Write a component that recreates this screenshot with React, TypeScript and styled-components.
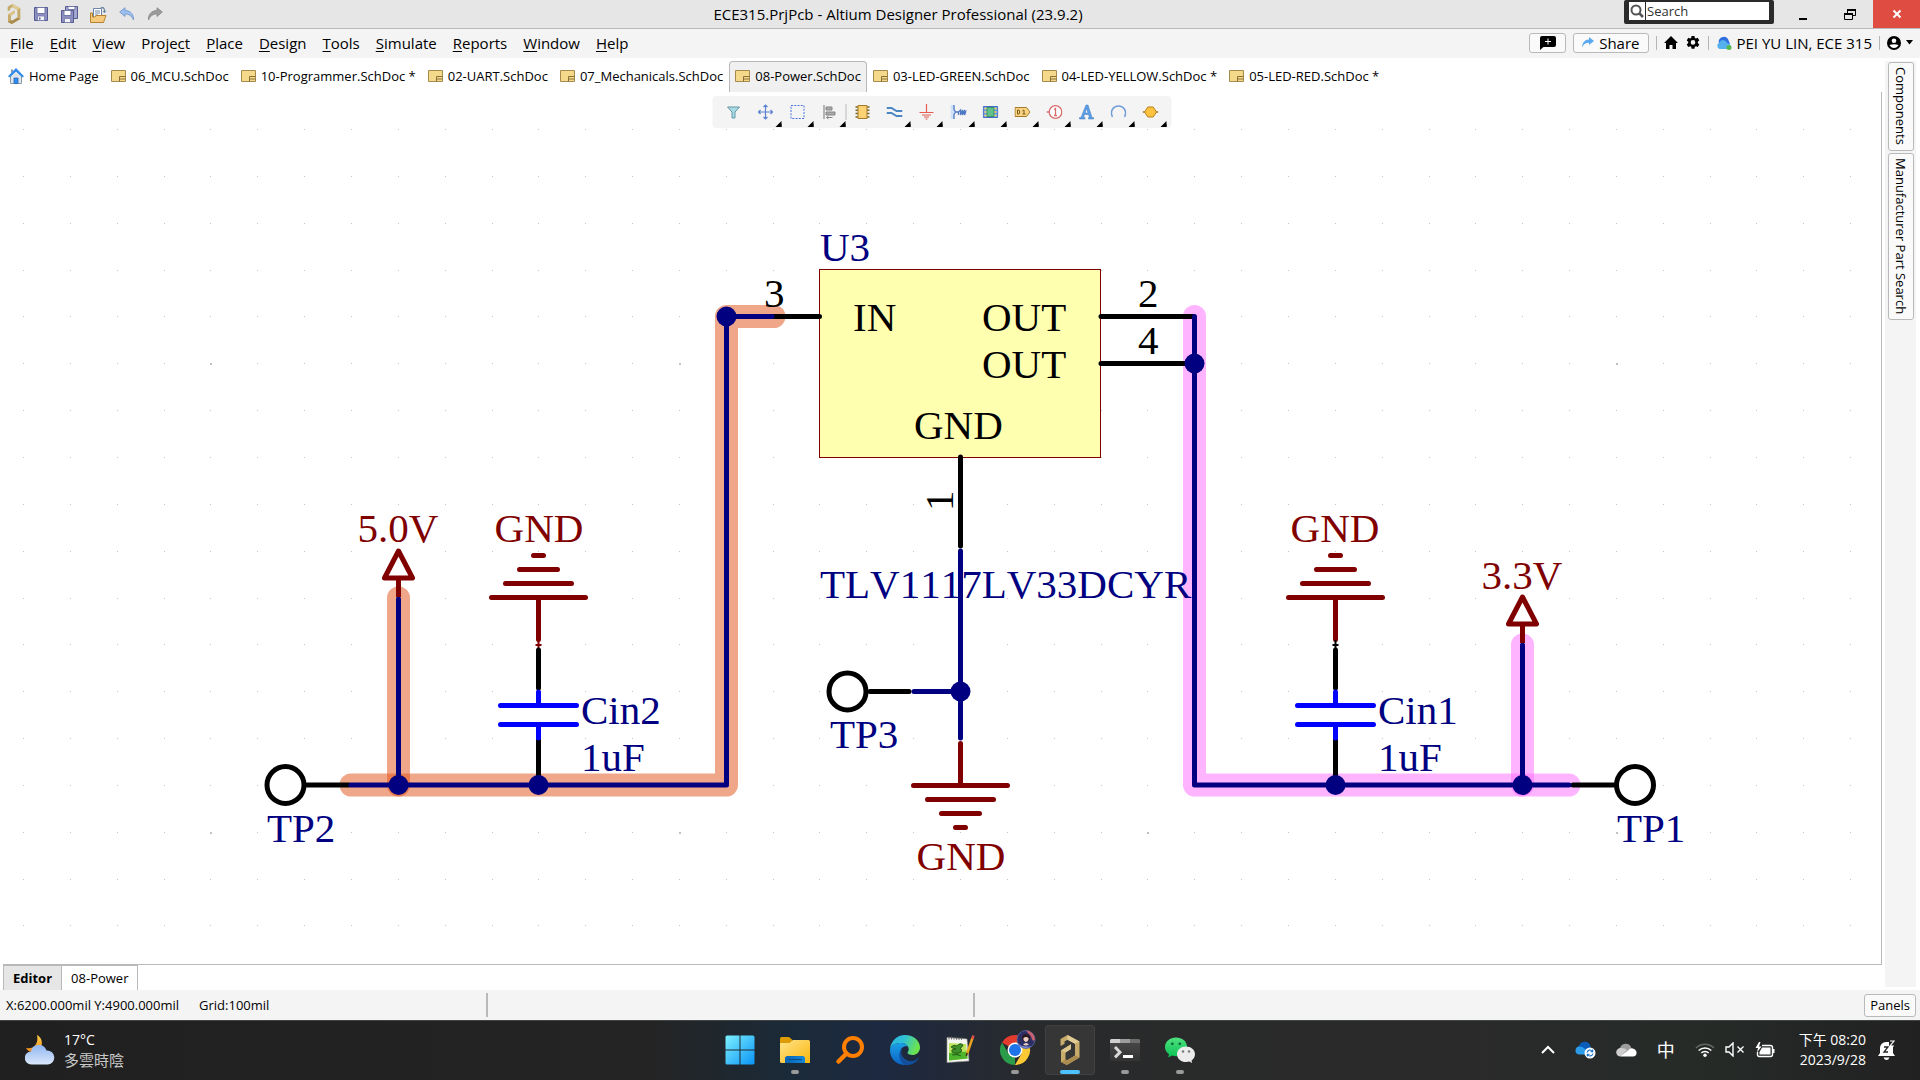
import React from "react";
import styled, { createGlobalStyle, css } from "styled-components";

const UI = `"Open Sans", "Noto Sans", "Noto Sans CJK TC", sans-serif`;

const Global = createGlobalStyle`
  *, *::before, *::after { box-sizing: border-box; }
  html, body, #root { height: 100%; }
  body { margin: 0; font-family: ${UI}; font-size: 13px; color: #000; background: #fff; overflow: hidden; }
  button, input { font: inherit; color: inherit; }
  svg { display: block; flex: none; }
`;

const bare = css`
  border: 0;
  padding: 0;
  margin: 0;
  background: none;
  display: flex;
  align-items: center;
  white-space: nowrap;
`;

const Shell = styled.div`
  height: 100%;
  display: flex;
  flex-direction: column;
`;

/* ---------- title bar ---------- */
const TitleBar = styled.header`
  display: grid;
  grid-template-columns: 1fr auto 1fr;
  height: 29px;
  background: #e6e6e6;
  border-bottom: 1px solid #b9b9b9;
`;
const QuickAccess = styled.div`
  display: flex;
  align-items: center;
  gap: 12px;
  padding-left: 7px;
`;
const IconButton = styled.button`
  ${bare}
  justify-content: center;
`;
const Title = styled.h1`
  margin: 0;
  font-size: 15px;
  font-weight: 400;
  line-height: 28px;
  padding-right: 124px;
`;
const WindowTools = styled.div`
  display: flex;
  justify-content: flex-end;
  align-items: flex-start;
`;
const SearchBox = styled.label`
  display: flex;
  height: 24px;
  width: 150px;
  padding: 2px 5px 4px;
  gap: 1px;
  background: #2b2b2b;
  border-radius: 2px;
  margin-right: 5px;
`;
const SearchIcon = styled.span`
  width: 16px;
  background: #fff;
  display: grid;
  place-items: center;
`;
const SearchInput = styled.input`
  flex: 1;
  min-width: 0;
  border: 0;
  padding: 0 1px;
  background: #fff;
  font-size: 13px;
  outline: 0;
  &::placeholder { color: #333; opacity: 1; }
`;
const WinButton = styled(IconButton)<{ $close?: boolean }>`
  width: 47px;
  height: 28px;
  background: ${(p) => (p.$close ? "#df4d42" : "none")};
`;

/* ---------- menu bar ---------- */
const MenuBar = styled.div`
  display: flex;
  align-items: center;
  justify-content: space-between;
  height: 29px;
  background: #f4f4f4;
  padding: 0 7px 2px 10px;
`;
const Menus = styled.nav`
  display: flex;
  gap: 16px;
`;
const MenuButton = styled.button`
  ${bare}
  display: block;
  font-size: 15px;
  line-height: 26px;
  u { text-underline-offset: 2px; text-decoration-thickness: 1px; }
`;
const Account = styled.div`
  display: flex;
  align-items: center;
  gap: 7px;
  font-size: 15px;
`;
const BoxButton = styled.button`
  ${bare}
  justify-content: center;
  gap: 5px;
  height: 20px;
  padding: 0 8px;
  border: 1px solid #b9b9b9;
  border-radius: 3px;
  background: #fafafa;
`;
const CommentButton = styled(BoxButton)`
  width: 37px;
`;
const BarSep = styled.span`
  width: 1px;
  height: 14px;
  background: #b5b5b5;
`;
const UserButton = styled.button`
  ${bare}
  gap: 5px;
`;

/* ---------- work area ---------- */
const Work = styled.div`
  flex: 1;
  min-height: 0;
  display: grid;
  grid-template-columns: 1fr 35px;
`;
const Main = styled.div`
  min-width: 0;
  display: flex;
  flex-direction: column;
  padding-right: 3px;
`;
const DocTabs = styled.div`
  display: flex;
  align-items: flex-end;
  height: 34px;
  padding-left: 2px;
`;
const DocTab = styled.button<{ $active?: boolean }>`
  ${bare}
  gap: 5px;
  height: 31px;
  padding: 0 5px 2px;
  font-size: 13px;
  border: 1px solid ${(p) => (p.$active ? "#b9b9b9" : "transparent")};
  border-bottom: 0;
  border-radius: 4px 4px 0 0;
  background: ${(p) => (p.$active ? "#f0f0f0" : "none")};
`;
const Canvas = styled.main`
  position: relative;
  flex: 1;
  min-height: 0;
  border-right: 1px solid #b9b9b9;
  border-bottom: 1px solid #b9b9b9;
  margin-left: 3px;
`;
const Sheet = styled.svg`
  width: 100%;
  height: 100%;
`;
const ActiveBar = styled.div`
  position: absolute;
  top: 4px;
  left: 50%;
  transform: translateX(-50%);
  display: flex;
  align-items: center;
  height: 32px;
  padding: 0 5px;
  background: #f4f4f4;
  border-radius: 4px;
`;
const Tool = styled.button<{ $more?: boolean }>`
  ${bare}
  position: relative;
  justify-content: center;
  width: 32px;
  height: 32px;
  ${(p) =>
    p.$more &&
    css`
      &::after {
        content: "";
        position: absolute;
        right: 0;
        bottom: 1px;
        border: 3px solid transparent;
        border-right-color: #000;
        border-bottom-color: #000;
      }
    `}
`;
const ToolSep = styled.span`
  width: 1px;
  height: 16px;
  background: #b9b9b9;
`;
const SideTabs = styled.aside`
  display: flex;
  flex-direction: column;
  gap: 2px;
  margin: 3px 4px 3px 0;
  padding: 1px 2px 0 3px;
  background: #f4f4f4;
`;
const SideTab = styled.button`
  ${bare}
  writing-mode: vertical-rl;
  justify-content: center;
  padding: 4px 0 5px;
  font-size: 13px;
  line-height: 24px;
  border: 1px solid #b9b9b9;
  border-radius: 3px;
  background: #fafafa;
`;
const SheetTabs = styled.div`
  display: flex;
  height: 25px;
  padding-left: 3px;
`;
const SheetTab = styled.button<{ $active?: boolean }>`
  ${bare}
  padding: 0 9px;
  font-size: 13px;
  border: solid #b9b9b9;
  border-width: 1px 1px 0 ${(p) => (p.$active ? "1px" : "0")};
  background: ${(p) => (p.$active ? "#e6e6e6" : "#fff")};
  font-weight: ${(p) => (p.$active ? 700 : 400)};
`;

/* ---------- status bar ---------- */
const StatusBar = styled.footer`
  display: flex;
  align-items: center;
  height: 30px;
  padding: 0 4px 0 6px;
  background: #f4f4f4;
`;
const StatusCell = styled.div<{ $width: string }>`
  display: flex;
  align-items: center;
  gap: 20px;
  width: ${(p) => p.$width};
  height: 24px;
  border-right: 2px solid #b9b9b9;
`;
const PanelsButton = styled(BoxButton)`
  height: 23px;
  padding: 0 5px;
  margin-left: auto;
  font-size: 13px;
`;

/* ---------- taskbar ---------- */
const Taskbar = styled.div`
  display: grid;
  grid-template-columns: 1fr auto 1fr;
  align-items: center;
  height: 60px;
  padding-bottom: 2px;
  border-top: 1px solid #404645;
  color: #fff;
  background: linear-gradient(90deg, #202020 0%, #242424 34%, #1b2a38 41%, #1d2941 46%, #292a2b 54%, #2a2a2a 75%, #262b28 88%, #212121 100%);
`;
const Weather = styled.button`
  ${bare}
  gap: 9px;
  padding-left: 25px;
  text-align: left;
  font-size: 14px;
  line-height: 20px;
`;
const Dim = styled.span`
  display: block;
  font-size: 15px;
  color: #c8c8c8;
`;
const Apps = styled.div`
  display: flex;
  gap: 5px;
`;
const AppButton = styled.button<{ $state?: "open" | "active" }>`
  ${bare}
  position: relative;
  justify-content: center;
  width: 50px;
  height: 50px;
  border-radius: 4px;
  ${(p) => p.$state === "active" && "background: #363636; box-shadow: inset 0 0 0 1px #414141;"}
  &::after {
    content: "";
    display: ${(p) => (p.$state ? "block" : "none")};
    position: absolute;
    bottom: 1px;
    left: 50%;
    transform: translateX(-50%);
    width: ${(p) => (p.$state === "active" ? "20px" : "8px")};
    height: 4px;
    border-radius: 2px;
    background: ${(p) => (p.$state === "active" ? "#4cc2ff" : "#9a9a9a")};
  }
`;
const Tray = styled.div`
  display: flex;
  align-items: center;
  justify-content: flex-end;
  gap: 20px;
  padding-right: 25px;
`;
const TrayGroup = styled.button`
  ${bare}
  gap: 10px;
`;
const ClockGroup = styled.div`
  display: flex;
  align-items: center;
  gap: 12px;
  padding-left: 4px;
`;
const Ime = styled.button`
  ${bare}
  font-size: 18px;
  line-height: 20px;
`;
const Clock = styled.button`
  ${bare}
  display: block;
  text-align: right;
  font-size: 14px;
  line-height: 20px;
`;

/* ---------- icons ---------- */
const Altium = ({ w, h }: { w: number; h: number }) => (
  <svg width={w} height={h} viewBox="0 0 20 30">
    <path d="M.5 4L7.500 0 19.500 6.500V22.500L6.800 30 1 27V15.500L11 9.300V14L5.500 17.500V24.500L7 25.300 15 20.500V8.800L7.500 4.700 4.500 6.500V9L.5 11Z" fill="#c6ab6b" />
    <path d="M7.500 0L19.500 6.500 15 8.800 7.500 4.700Z" fill="#e0cb93" />
    <path d="M1 27L5.500 24.500 7 25.300 15 20.500 19.500 22.500 6.800 30Z" fill="#a98c4e" />
    <path d="M11 9.300V14L5.500 17.500 1 15.500Z" fill="#dcc68c" />
  </svg>
);

const Floppy = () => (
  <svg width="16" height="16" viewBox="0 0 16 16">
    <path d="M1.500 1.500h13v13h-13z" fill="#8d8fc0" stroke="#54598f" />
    <path d="M4 1.500h8v6H4z" fill="#fff" stroke="#7377a8" />
    <path d="M4.500 10h7v4.500h-7z" fill="#f3f3f8" stroke="#7377a8" strokeWidth=".8" />
    <path d="M6 11.500h1.500v2H6z" fill="#54598f" />
  </svg>
);
const FloppyAll = () => (
  <svg width="17" height="17" viewBox="0 0 17 17">
    <path d="M4.500.5h12v12h-12z" fill="#a3a5cf" stroke="#54598f" />
    <path d="M7 .5h7v3H7z" fill="#fff" stroke="#7377a8" />
    <path d="M.5 4.500h12v12H.5z" fill="#8d8fc0" stroke="#54598f" />
    <path d="M3 4.500h7v5H3z" fill="#fff" stroke="#7377a8" />
    <path d="M3.500 12.500h6v4h-6z" fill="#f3f3f8" stroke="#7377a8" strokeWidth=".8" />
  </svg>
);
const OpenDoc = () => (
  <svg width="17" height="17" viewBox="0 0 17 17">
    <path d="M3.500 2.500h8v9h-8z" fill="#fff" stroke="#6c87a8" />
    <path d="M5 5h5M5 7h5M5 9h3" stroke="#6c87a8" />
    <path d="M10 2c3-2 5-1 5 3l1.500-.5L14.500 7 12.500 5 14 5c0-3-1.500-3-4-3z" fill="#5a7c9c" />
    <path d="M.5 7h2v4h2.500l1-1.500h10l-2.500 7H.5z" fill="#f5ca7c" stroke="#b5822f" />
  </svg>
);
const Undo = () => (
  <svg width="16" height="14" viewBox="0 0 16 14">
    <path d="M6 .7L.7 5 6 9.500V7c4 0 6.500 1.500 8.500 6C15 8 12 3.500 6 3.500z" fill="#9cc0ee" stroke="#6b91c9" strokeWidth=".8" />
  </svg>
);
const Redo = () => (
  <svg width="16" height="14" viewBox="0 0 16 14">
    <path d="M10 .7L15.300 5 10 9.500V7c-4 0-6.500 1.500-8.500 6C1 8 4 3.500 10 3.500z" fill="#9b9b9b" stroke="#858585" strokeWidth=".8" />
  </svg>
);
const Doc = () => (
  <svg width="15" height="12" viewBox="0 0 15 12">
    <path d="M.5.500h14v11H.5z" fill="#f5d98b" stroke="#a48a4c" />
    <path d="M8.500 11.500v-5h6M8.500 9h6" fill="none" stroke="#8a713a" />
  </svg>
);
const HomeBlue = () => (
  <svg width="16" height="16" viewBox="0 0 16 16">
    <path d="M2.500 8v7.500h11V8L8 3z" fill="#dfe4ea" stroke="#8e9aa8" />
    <path d="M3 5V1.500h2V4z" fill="#8e9aa8" />
    <path d="M8 0l8 8.200-1.500 1.300L8 3.200 1.500 9.500 0 8.200z" fill="#2f8cf0" />
    <path d="M6 10h4v5.500H6z" fill="#2f8cf0" stroke="#1c62b5" strokeWidth=".7" />
  </svg>
);

const toolIcons: { name: string; more?: boolean; art: React.ReactNode }[] = [
  { name: "Filter", art: <path d="M2 3h12l-4.500 5v6h-3V8z" fill="#a8dbe2" stroke="#6497a8" /> },
  { name: "Move", more: true, art: <path d="M8 1v14M1 8h14M6 3l2-2 2 2M6 13l2 2 2-2M3 6L1 8l2 2M13 6l2 2-2 2" fill="none" stroke="#5b82d0" strokeWidth="1.200" /> },
  { name: "Select area", more: true, art: <path d="M1.500 1.500h13v13h-13z" fill="none" stroke="#4b74e0" strokeDasharray="2 1.250" /> },
  {
    name: "Align", more: true,
    art: <><path d="M2.500 1v14" stroke="#777" /><path d="M4.500 3h6v3h-6zM4.500 8h9v3h-9z" fill="#aaa" stroke="#858585" /><path d="M11 13.500H5M7 12l-2 1.500L7 15" fill="none" stroke="#888" /></>,
  },
  {
    name: "Place part",
    art: <><path d="M1 3h14M1 6.300h14M1 9.600h14M1 13h14" stroke="#7b6630" strokeWidth="1.500" /><path d="M3.500 1.500h9v13h-9z" fill="#fcd272" stroke="#a37a2a" /></>,
  },
  { name: "Place wire", more: true, art: <path d="M0 4h5l5 3h6M0 9h5l5 3h6" fill="none" stroke="#4a86c4" strokeWidth="2" /> },
  { name: "Place ground", more: true, art: <path d="M8 0v8.500M1 8.500h14M3.500 11h9M5.500 13h5M7 15h2" stroke="#e25c50" strokeWidth="1.200" /> },
  {
    name: "Place harness", more: true,
    art: <><path d="M0 1h3.500v14H0z" fill="#cfe2fa" /><path d="M3.500 1v4.500L5 8l-1.500 2.500V15M5 8h2.500M8 11V8l2-2v5l2-5v5l2-5v5l2-5" fill="none" stroke="#4f78c4" strokeWidth="1.300" /></>,
  },
  {
    name: "Place sheet symbol", more: true,
    art: <><path d="M.8 2.500h14.400v11H.8z" fill="#6f9be8" stroke="#4371c9" /><path d="M4.500 3.500h7v9h-7z" fill="#62c08a" stroke="#3b8f64" /><path d="M2 4.500H4M2 8H4M2 11.500H4M12 4.500h2M12 8h2M12 11.500h2" stroke="#ffe14a" strokeWidth="1.500" /></>,
  },
  {
    name: "Place port", more: true,
    art: <><path d="M.5 3.500h11.500L15.500 8 12 12.500H.5z" fill="#fad480" stroke="#a37a2a" /><path d="M3 6v4h1.500q1.500-2 0-4zM8 6.800L9.500 6v4M8 10h3" fill="none" stroke="#7b5a20" /></>,
  },
  {
    name: "Place directive", more: true,
    art: <><circle cx="9" cy="8" r="6.300" fill="#fff" stroke="#d86d6d" strokeWidth="1.300" /><path d="M0 8h3M7.500 5.500L9 4.500v7M7.500 11.500h3" fill="none" stroke="#d86d6d" strokeWidth="1.300" /></>,
  },
  {
    name: "Place text", more: true,
    art: <path d="M7.500 1h2l4 12.500H15V15h-5v-1.500h1L10 10.500H6L5 13.500h1.500V15H1v-1.500h1.500zM8 4.500L6.500 9h3z" fill="#5c9ee6" stroke="#3d7cc4" strokeWidth=".5" />,
  },
  { name: "Place arc", more: true, art: <path d="M2 13C-1 7 3 2 8 2s9 5 6 11" fill="none" stroke="#6f9cd6" strokeWidth="1.500" /> },
  {
    name: "Place junction", more: true,
    art: <><path d="M0 8h16" stroke="#a37a2a" strokeWidth="1.500" /><path d="M5.300 3h5.400L14 8l-3.300 5H5.300L2 8z" fill="#fdc23e" stroke="#b9821e" /></>,
  },
];

/* ---------- schematic ---------- */
const P = 46.85;
const NAVY = "#000080";
const MAROON = "#800000";

const Label = styled.text`
  font-family: "Liberation Serif", "Times New Roman", serif;
  font-size: 41px;
  font-kerning: none;
`;

const Line = ({ d, c }: { d: string; c: string }) => (
  <path d={d} stroke={c} strokeWidth="5" strokeLinecap="round" strokeLinejoin="round" fill="none" />
);
const Highlight = ({ d, c }: { d: string; c: string }) => (
  <path d={d} stroke={c} strokeOpacity=".5" strokeWidth="23" strokeLinecap="round" strokeLinejoin="round" fill="none" />
);
const Junction = ({ x, y }: { x: number; y: number }) => <circle cx={x} cy={y} r="10" fill={NAVY} />;
const TestPoint = ({ x, y }: { x: number; y: number }) => (
  <circle cx={x} cy={y} r="18.500" fill="#fff" stroke="#000" strokeWidth="5" />
);
const Ground = ({ x, y, up }: { x: number; y: number; up?: boolean }) => {
  const s = up ? -1 : 1;
  return (
    <Line
      c={MAROON}
      d={[47, 33, 19, 5].map((w, i) => `M${x - w} ${y + s * i * 14}H${x + w}`).join("") + `M${x} ${y}V${y - s * 42}`}
    />
  );
};
const Supply = ({ x, y }: { x: number; y: number }) => (
  <path d={`M${x} ${y}V${y - 19}M${x - 14} ${y - 19}L${x} ${y - 46}L${x + 14} ${y - 19}Z`} fill="none" stroke={MAROON} strokeWidth="5" strokeLinejoin="round" />
);
const Capacitor = ({ x, joint }: { x: number; joint: string }) => (
  <>
    <path d={`M${x} 640V650M${x - 3} 645H${x + 3}`} stroke={joint} strokeWidth="2" />
    <Line c="#000" d={`M${x} 650V688M${x} 740V785`} />
    <Line c="#0000ff" d={`M${x} 692V705M${x - 38} 705.500H${x + 38}M${x - 38} 724.500H${x + 38}M${x} 725V738`} />
  </>
);

const Grid = () => {
  const dots: React.ReactNode[] = [];
  for (let r = 0; r < 18; r++)
    for (let c = 0; c < 40; c++) {
      const major = c % 10 === 4 && r % 10 === 5;
      dots.push(
        <rect key={`${r}-${c}`} x={Math.round(23 + c * P)} y={Math.round(129 + r * P)} width={major ? 2 : 1} height={major ? 2 : 1} fill={major ? "#c0c0c0" : "#c4c4c4"} />
      );
    }
  return <g shapeRendering="crispEdges">{dots}</g>;
};

const ORANGE = "#e15014";
const PINK = "#ff69ff";

const Schematic = () => (
  <Sheet viewBox="3 92 1878 872" role="img" aria-label="Power supply schematic">
    <Grid />
    <Highlight c={ORANGE} d="M351 785H726.500V316.500H774" />
    <Highlight c={ORANGE} d="M398.500 598V785" />
    <Highlight c={PINK} d="M1194.500 316.500V785H1569" />
    <Highlight c={PINK} d="M1522.500 645V785" />

    <rect x="819.500" y="269.500" width="281" height="188" fill="#ffffb0" stroke={MAROON} />
    <Line c="#000" d="M774 316.500H819.500M1101 316.500H1193M1101 363.500H1193M960.500 457V546M307 785H349M870 691.500H909M1573 785H1614" />
    <Line c={NAVY} d="M351 785H726.500V316.500H772M398.500 599V785M1194.500 316.500V785H1569M1522.500 645V785M960.500 551V738M914 691.500H960" />

    <Supply x={398.5} y={597} />
    <Supply x={1522.5} y={643} />
    <Ground x={538.5} y={597.5} up />
    <Ground x={1335.5} y={597.5} up />
    <Ground x={960.5} y={785.5} />
    <Capacitor x={538.5} joint={MAROON} />
    <Capacitor x={1335.5} joint="#000" />

    <Junction x={398.5} y={785} />
    <Junction x={538.5} y={785} />
    <Junction x={726.5} y={316.5} />
    <Junction x={1194.5} y={363.5} />
    <Junction x={1335.5} y={785} />
    <Junction x={1522.5} y={785} />
    <Junction x={960.5} y={691.5} />
    <TestPoint x={285.5} y={785} />
    <TestPoint x={847.5} y={691.5} />
    <TestPoint x={1635} y={785} />

    <g fill="#000">
      <Label x="764" y="307">3</Label>
      <Label x="853" y="331">IN</Label>
      <Label x="982" y="331">OUT</Label>
      <Label x="982" y="378">OUT</Label>
      <Label x="914" y="439">GND</Label>
      <Label x="1138" y="307">2</Label>
      <Label x="1138" y="354">4</Label>
      <Label transform="translate(953 511) rotate(-90)">1</Label>
    </g>
    <g fill={NAVY}>
      <Label x="820" y="261">U3</Label>
      <Label x="820" y="598">TLV1117LV33DCYR</Label>
      <Label x="267" y="842">TP2</Label>
      <Label x="830" y="748">TP3</Label>
      <Label x="1617" y="842">TP1</Label>
      <Label x="581" y="724">Cin2</Label>
      <Label x="581" y="771">1uF</Label>
      <Label x="1378" y="724">Cin1</Label>
      <Label x="1378" y="771">1uF</Label>
    </g>
    <g fill={MAROON} textAnchor="middle">
      <Label x="398" y="542">5.0V</Label>
      <Label x="539" y="542">GND</Label>
      <Label x="1335" y="542">GND</Label>
      <Label x="1522" y="589">3.3V</Label>
      <Label x="961" y="870">GND</Label>
    </g>
  </Sheet>
);

/* ---------- data ---------- */
const menus: [string, string, string][] = [
  ["", "F", "ile"], ["", "E", "dit"], ["", "V", "iew"], ["Proje", "c", "t"], ["", "P", "lace"], ["", "D", "esign"],
  ["", "T", "ools"], ["", "S", "imulate"], ["", "R", "eports"], ["", "W", "indow"], ["", "H", "elp"],
];
const docs = [
  "06_MCU.SchDoc", "10-Programmer.SchDoc *", "02-UART.SchDoc", "07_Mechanicals.SchDoc", "08-Power.SchDoc",
  "03-LED-GREEN.SchDoc", "04-LED-YELLOW.SchDoc *", "05-LED-RED.SchDoc *",
];

const apps: { name: string; state?: "open" | "active"; art: React.ReactNode }[] = [
  {
    name: "Start",
    art: (
      <svg width="30" height="30" viewBox="0 0 30 30">
        <defs><linearGradient id="win" x1="0" y1="0" x2="1" y2="1"><stop offset="0" stopColor="#7df0ff" /><stop offset="1" stopColor="#0a94f5" /></linearGradient></defs>
        <path d="M2 .500H14.500V14.500H.5V2Q.5.500 2 .500ZM15.500.500H28Q29.500.500 29.500 2V14.500H15.500ZM.5 15.500H14.500V29.500H2Q.5 29.500.5 28ZM15.500 15.500H29.500V28Q29.500 29.500 28 29.500H15.500Z" fill="url(#win)" />
      </svg>
    ),
  },
  {
    name: "File Explorer", state: "open",
    art: (
      <svg width="30" height="28" viewBox="0 0 30 28">
        <defs>
          <linearGradient id="fold" x1="0" y1="0" x2="1" y2="1"><stop offset="0" stopColor="#ffe48a" /><stop offset="1" stopColor="#fbb60d" /></linearGradient>
          <linearGradient id="tray" x1="0" y1="0" x2="1" y2="0"><stop offset="0" stopColor="#0a64b4" /><stop offset="1" stopColor="#1387d8" /></linearGradient>
        </defs>
        <path d="M0 2.500Q0 1 1.500 1H9L12.500 4V8H0Z" fill="#dd9c06" />
        <path d="M0 7H9.500L13 4H28.500Q30 4 30 5.500V27H1.500Q0 27 0 25.500Z" fill="url(#fold)" />
        <path d="M5 27V22.500Q5 20 7.500 20H22.500Q25 20 25 22.500V27Z" fill="url(#tray)" />
        <path d="M8.500 23.500H21.500" stroke="#074a86" />
      </svg>
    ),
  },
  {
    name: "Search Everything",
    art: (
      <svg width="30" height="30" viewBox="0 0 30 30">
        <circle cx="18" cy="12" r="9" fill="none" stroke="#ff7f00" strokeWidth="4" />
        <path d="M11.500 18.500L3.500 26.500" stroke="#ff7f00" strokeWidth="4.500" strokeLinecap="round" />
      </svg>
    ),
  },
  {
    name: "Edge",
    art: (
      <svg width="30" height="30" viewBox="0 0 30 30">
        <defs>
          <linearGradient id="e1" x1="0" y1="0" x2="1" y2=".3"><stop offset="0" stopColor="#2bb4e8" /><stop offset=".5" stopColor="#30c2d4" /><stop offset="1" stopColor="#6be34f" /></linearGradient>
          <linearGradient id="e2" x1="0" y1="0" x2="0" y2="1"><stop offset="0" stopColor="#1ba0e6" /><stop offset="1" stopColor="#0b62c4" /></linearGradient>
        </defs>
        <path d="M0 14C1 6 7 0 15 0c9 0 15 6 15 12.500 0 5-4 7.500-7.500 7.500-3 0-5-1-5-2.200 0-.8 1.200-1.500 1.200-3.800 0-3-3-6-7.500-6C6 8 1.500 10 0 14z" fill="url(#e1)" />
        <path d="M0 14C1.500 10 6 8 11 8c3.500 0 6 1.700 7 3.500-5-1.500-9.500 3-6.500 9C14 25 20 28 25 26.500 23 28.500 19 30 15 30 6 30-.5 23 0 14z" fill="url(#e2)" />
        <path d="M12.300 13.500C10 17 11 23 17 25.500c4 1.600 8.500.500 11-2.500.6-.6 1 0 .7.500C26 28 21 30 16 30c-6-1-9.500-12-3.700-16.500z" fill="#124f9c" />
      </svg>
    ),
  },
  {
    name: "Notepad++",
    art: (
      <svg width="30" height="30" viewBox="0 0 30 30">
        <path d="M2 2.500L22 4 24 26 2 27.500Z" fill="#f4f4f0" stroke="#9a9a96" strokeWidth=".6" />
        <path d="M4 8L21 9 22.500 23.500 4 25.500Z" fill="#b9e65c" />
        <path d="M4 18L22 16.500 22.500 23.500 4 25.500Z" fill="#4fb52c" />
        <path d="M6 12q3-3 6-1 3-4 6-1-1 3-3 3 3 2 1 4-3 2-6 1-4 0-3-3 2-1 4-1-3 0-5-2zM7 20q5-2 9 1" fill="#3f8f2a" stroke="#1d4c14" strokeWidth=".8" />
        <path d="M4 1.500v3M6.500 1.500v3M9 1.700v3M11.500 1.800v3M14 2v3M16.500 2v3" stroke="#555" strokeWidth=".8" />
        <path d="M27.500 3L22 19" stroke="#e8a11c" strokeWidth="2.500" />
        <path d="M28.500.500L27.300 4" stroke="#d8524a" strokeWidth="2.500" />
        <path d="M22.200 18L21.300 21" stroke="#3b2b12" strokeWidth="1.500" />
      </svg>
    ),
  },
  {
    name: "Chrome", state: "open",
    art: (
      <svg width="42" height="42" viewBox="-6 -6 42 42">
        <path d="M15 15L2 7.500A15 15 0 0 1 28 7.500H15Z" fill="#e33b2e" />
        <path d="M15 15L15 30A15 15 0 0 1 2 7.500L8.500 18.700Z" fill="#2a9c4a" />
        <path d="M15 7.500H28A15 15 0 0 1 15 30L21.500 18.700Z" fill="#fcc934" />
        <circle cx="15" cy="15" r="7.500" fill="#fff" />
        <circle cx="15" cy="15" r="6" fill="#1f73e8" />
        <circle cx="26" cy="4.500" r="9" fill="#2b2f66" stroke="#5b6aa8" strokeWidth=".8" />
        <path d="M26-4.500a9 9 0 0 1 9 9c-2 3-3 0-4-3-1-2-3-3-5-6z" fill="#c9606a" />
        <path d="M18 8q4 5 14 3-3 2-6 2-5 0-8-5z" fill="#7f8fe0" />
        <circle cx="26" cy="3" r="4" fill="#2a1a20" />
        <path d="M23.500 3q2.500-2 5 0v2q-2.500 4-5 0zM23 9.500q3-3 6 0-3 2-6 0z" fill="#e9cfc4" />
      </svg>
    ),
  },
  { name: "Altium Designer", state: "active", art: <Altium w={20} h={30} /> },
  {
    name: "Terminal", state: "open",
    art: (
      <svg width="30" height="24" viewBox="0 0 30 24">
        <defs><linearGradient id="term" x1="0" y1="0" x2="0" y2="1"><stop offset="0" stopColor="#4a4a4a" /><stop offset="1" stopColor="#333" /></linearGradient></defs>
        <rect y="1" width="30" height="22" rx="1.500" fill="url(#term)" />
        <path d="M0 5V2.500Q0 1 1.500 1H10V5Z" fill="#d0d0d0" />
        <path d="M10 1H20V5H10Z" fill="#9d9d9d" />
        <path d="M20 1H28.500Q30 1 30 2.500V5H20Z" fill="#6e6e6e" />
        <path d="M5 9l5 5.200-5 5.200" fill="none" stroke="#d8d8d8" strokeWidth="3" />
        <path d="M13 18.500H23" stroke="#fff" strokeWidth="3" />
      </svg>
    ),
  },
  {
    name: "WeChat", state: "open",
    art: (
      <svg width="30" height="30" viewBox="0 0 30 30">
        <defs><linearGradient id="wc" x1="0" y1="0" x2="0" y2="1"><stop offset="0" stopColor="#4fe07e" /><stop offset="1" stopColor="#0bc255" /></linearGradient></defs>
        <path d="M11 2.500C5 2.500 0 6.500 0 12c0 3 1.500 5.500 4 7.200L3.300 22.500 7 20.600c8.500 2.400 15-2.600 15-8.600S17 2.500 11 2.500z" fill="url(#wc)" />
        <circle cx="7.300" cy="8.800" r="1.400" fill="#0d6b36" /><circle cx="14.800" cy="8.800" r="1.400" fill="#0d6b36" />
        <path d="M21 11.500c-5 0-9 3.300-9 7.700S16 27 21 27c1.200 0 2.300-.2 3.300-.5l2.900 1.500-.7-2.600c2.200-1.500 3.500-3.700 3.500-6.200 0-4.400-4-7.700-9-7.700z" fill="#ececec" />
        <circle cx="18" cy="16.500" r="1.200" fill="#777" /><circle cx="24" cy="16.500" r="1.200" fill="#777" />
      </svg>
    ),
  },
];

export default function App() {
  return (
    <Shell>
      <Global />
      <TitleBar>
        <QuickAccess>
          <Altium w={14} h={20} />
          <IconButton aria-label="Save"><Floppy /></IconButton>
          <IconButton aria-label="Save all"><FloppyAll /></IconButton>
          <IconButton aria-label="Open"><OpenDoc /></IconButton>
          <IconButton aria-label="Undo"><Undo /></IconButton>
          <IconButton aria-label="Redo"><Redo /></IconButton>
        </QuickAccess>
        <Title>ECE315.PrjPcb - Altium Designer Professional (23.9.2)</Title>
        <WindowTools>
          <SearchBox>
            <SearchIcon>
              <svg width="14" height="14" viewBox="0 0 14 14"><circle cx="6" cy="6" r="4.500" fill="none" stroke="#555" strokeWidth="2" /><path d="M9 9l4 4" stroke="#555" strokeWidth="2.500" /></svg>
            </SearchIcon>
            <SearchInput aria-label="Search" placeholder="Search" />
          </SearchBox>
          <WinButton aria-label="Minimize"><svg width="8" height="12"><path d="M0 10h8v2H0z" /></svg></WinButton>
          <WinButton aria-label="Restore">
            <svg width="12" height="11" viewBox="0 0 12 11"><path d="M3.500 4V.5h8v6H9" fill="none" stroke="#000" /><path d="M3 1h9" stroke="#000" strokeWidth="2" /><path d="M.5 4.500h8v6h-8z" fill="none" stroke="#000" /><path d="M0 5h9" stroke="#000" strokeWidth="2" /></svg>
          </WinButton>
          <WinButton $close aria-label="Close"><svg width="10" height="10"><path d="M1.500 1.500l7 7M8.500 1.500l-7 7" stroke="#fff" strokeWidth="2" /></svg></WinButton>
        </WindowTools>
      </TitleBar>

      <MenuBar>
        <Menus>
          {menus.map(([a, u, b]) => (
            <MenuButton key={a + u + b}>{a}<u>{u}</u>{b}</MenuButton>
          ))}
        </Menus>
        <Account>
          <CommentButton aria-label="Comments">
            <svg width="16" height="14" viewBox="0 0 16 14"><path d="M2 0h12q2 0 2 2v7q0 2-2 2H3.500L0 14V2q0-2 2-2z" /><path d="M8 2.500v6M5 5.500h6" stroke="#fff" /></svg>
          </CommentButton>
          <BoxButton>
            <svg width="12" height="11" viewBox="0 0 12 11"><path d="M7 0l5 4-5 4V5.700C4 5.700 1.500 7 0 10.500.200 5.500 3 2.500 7 2.500z" fill="#5aa9f0" /></svg>
            Share
          </BoxButton>
          <BarSep />
          <IconButton aria-label="Home"><svg width="14" height="13" viewBox="0 0 14 13"><path d="M7 0l7 7h-2v6H8.500V9h-3v4H2V7H0z" /></svg></IconButton>
          <IconButton aria-label="Settings">
            <svg width="16" height="14" viewBox="0 0 24 24"><path fillRule="evenodd" d="M9.500 0h5l.6 3.300 2 1.100 3.100-1.200 2.500 4.300-2.500 2.200v2.500l2.500 2.200-2.500 4.300-3.100-1.200-2 1.100-.6 3.400h-5l-.6-3.400-2-1.100-3.100 1.200-2.500-4.300 2.500-2.200V9.700L1.300 7.500l2.500-4.300 3.100 1.200 2-1.100zM12 7a4 4 0 1 0 0 8 4 4 0 0 0 0-8z" /></svg>
          </IconButton>
          <BarSep />
          <UserButton>
            <svg width="16" height="14" viewBox="0 0 16 14"><path d="M3 7a5 5 0 0 1 9-4l2 5H4z" fill="#2f6fe0" /><path d="M3.500 13a3.500 3.500 0 0 1 0-6.500A4 4 0 0 1 11 7q3.500.5 3.500 3.500T12 13z" fill="#55b0ee" /><circle cx="13" cy="11.500" r="2.500" fill="#55b84e" /></svg>
            PEI YU LIN, ECE 315
          </UserButton>
          <BarSep />
          <UserButton aria-label="Account">
            <svg width="14" height="14" viewBox="0 0 14 14"><circle cx="7" cy="7" r="7" /><circle cx="7" cy="4.700" r="2.300" fill="#fff" /><path d="M2.500 9q4.500-1.500 9 0-1.500 3-4.500 3T2.500 9z" fill="#fff" /></svg>
            <svg width="7" height="5"><path d="M0 0h7L3.500 4.500z" /></svg>
          </UserButton>
        </Account>
      </MenuBar>

      <Work>
        <Main>
          <DocTabs>
            <DocTab><HomeBlue />Home Page</DocTab>
            {docs.map((d) => (
              <DocTab key={d} $active={d === "08-Power.SchDoc"}><Doc />{d}</DocTab>
            ))}
          </DocTabs>
          <Canvas>
            <Schematic />
            <ActiveBar role="toolbar" aria-label="Active bar">
              {toolIcons.map((t, i) => (
                <React.Fragment key={t.name}>
                  {i === 4 && <ToolSep />}
                  <Tool $more={t.more} aria-label={t.name}><svg width="16" height="16" viewBox="0 0 16 16">{t.art}</svg></Tool>
                </React.Fragment>
              ))}
            </ActiveBar>
          </Canvas>
          <SheetTabs>
            <SheetTab $active>Editor</SheetTab>
            <SheetTab>08-Power</SheetTab>
          </SheetTabs>
        </Main>
        <SideTabs>
          <SideTab>Components</SideTab>
          <SideTab>Manufacturer Part Search</SideTab>
        </SideTabs>
      </Work>

      <StatusBar>
        <StatusCell $width="482px"><span>X:6200.000mil Y:4900.000mil</span><span>Grid:100mil</span></StatusCell>
        <StatusCell $width="487px" />
        <PanelsButton>Panels</PanelsButton>
      </StatusBar>

      <Taskbar>
        <Weather>
          <svg width="30" height="30" viewBox="0 0 30 30">
            <defs>
              <linearGradient id="moon" x1="0" y1="0" x2="0" y2="1"><stop offset="0" stopColor="#ffd04a" /><stop offset="1" stopColor="#f08a1c" /></linearGradient>
              <linearGradient id="cl" x1="0" y1="0" x2="0" y2="1"><stop offset="0" stopColor="#8fb6f2" /><stop offset="1" stopColor="#dbe8fb" /></linearGradient>
            </defs>
            <path d="M12 0c8 4 6 17-4 17-4 0-6-2-7-4 8 2 13-5 11-13z" fill="url(#moon)" />
            <path d="M6.500 29.500a6.500 6.500 0 0 1-.5-13 8 8 0 0 1 15.500-1 7 7 0 1 1 1.500 14z" fill="url(#cl)" />
          </svg>
          <span>17°C<Dim>多雲時陰</Dim></span>
        </Weather>
        <Apps>
          {apps.map((a) => (
            <AppButton key={a.name} $state={a.state} aria-label={a.name}>{a.art}</AppButton>
          ))}
        </Apps>
        <Tray>
          <IconButton aria-label="Show hidden icons"><svg width="14" height="9"><path d="M1 8l6-6 6 6" fill="none" stroke="#fff" strokeWidth="2" /></svg></IconButton>
          <IconButton aria-label="OneDrive">
            <svg width="21" height="18" viewBox="0 0 21 18"><path d="M4 13A4.500 4.500 0 0 1 4 5 6 6 0 0 1 15 4l2 6z" fill="#0a5cb8" /><path d="M4 13.500a4 4 0 0 1 1-8q3 0 5 2.500l5 5.500z" fill="#2b9bea" /><circle cx="15" cy="12" r="5.500" fill="#fff" /><path d="M12 11.500a3 3 0 0 1 5.500-1M18 12.500a3 3 0 0 1-5.500 1M17.700 8.500v2.300h-2.200M12.300 15.500v-2.300h2.200" fill="none" stroke="#1673c9" strokeWidth="1.100" /></svg>
          </IconButton>
          <IconButton aria-label="Cloud storage">
            <svg width="21" height="14" viewBox="0 0 21 14"><path d="M4 13A4.500 4.500 0 0 1 4 5 6 6 0 0 1 15 4l2 8z" fill="#9c9c9c" /><path d="M5 5q4 0 6 2l-7 6.500A4.200 4.200 0 0 1 5 5z" fill="#cfcfcf" /><path d="M4 13.500L12 7.500Q15 4 18 6q3 1.500 2.500 4.500-.5 3-3.500 3z" fill="#fff" /></svg>
          </IconButton>
          <Ime>中</Ime>
          <TrayGroup aria-label="Network, sound, battery">
            <svg width="20" height="15" viewBox="0 0 20 15"><path d="M1 6a12.500 12.500 0 0 1 18 0" fill="none" stroke="#666" strokeWidth="1.500" /><path d="M3.700 8.500a9 9 0 0 1 12.600 0M6.300 11a5.300 5.300 0 0 1 7.400 0" fill="none" stroke="#fff" strokeWidth="1.500" /><circle cx="10" cy="13.200" r="1.700" fill="#fff" /></svg>
            <svg width="20" height="15" viewBox="0 0 20 15"><path d="M1 5h3l4-4v13l-4-4H1z" fill="none" stroke="#fff" strokeWidth="1.400" /><path d="M12.500 4.500l6 6M18.500 4.500l-6 6" stroke="#fff" strokeWidth="1.400" /></svg>
            <svg width="20" height="16" viewBox="0 0 20 16"><path d="M7 3.500h8.500q2 0 2 2v7q0 2-2 2h-11q-2 0-2-2V10" fill="none" stroke="#fff" strokeWidth="1.400" /><path d="M7 5.500h8.500v7h-11V10z" fill="#fff" /><path d="M18.500 7v4" stroke="#fff" strokeWidth="2" /><path d="M4 0L.5 6H3L2 10.500 6.500 4.500H4L5.500 0z" fill="#fff" /></svg>
          </TrayGroup>
          <ClockGroup>
            <Clock>下午 08:20<br />2023/9/28</Clock>
            <IconButton aria-label="Notifications">
              <svg width="17" height="20" viewBox="0 0 17 20"><path d="M0 16l2-3V8a6 6 0 0 1 6-6h3v4h4v7l2 3z" fill="#fff" /><path d="M5.500 17.500h6q-1 2.500-3 2.500t-3-2.500z" fill="#fff" /><path d="M6 7h4l-4 5h4" fill="none" stroke="#262626" strokeWidth="1.300" /><path d="M12 1h4l-4 5h4" fill="none" stroke="#fff" strokeWidth="1.200" /></svg>
            </IconButton>
          </ClockGroup>
        </Tray>
      </Taskbar>
    </Shell>
  );
}
